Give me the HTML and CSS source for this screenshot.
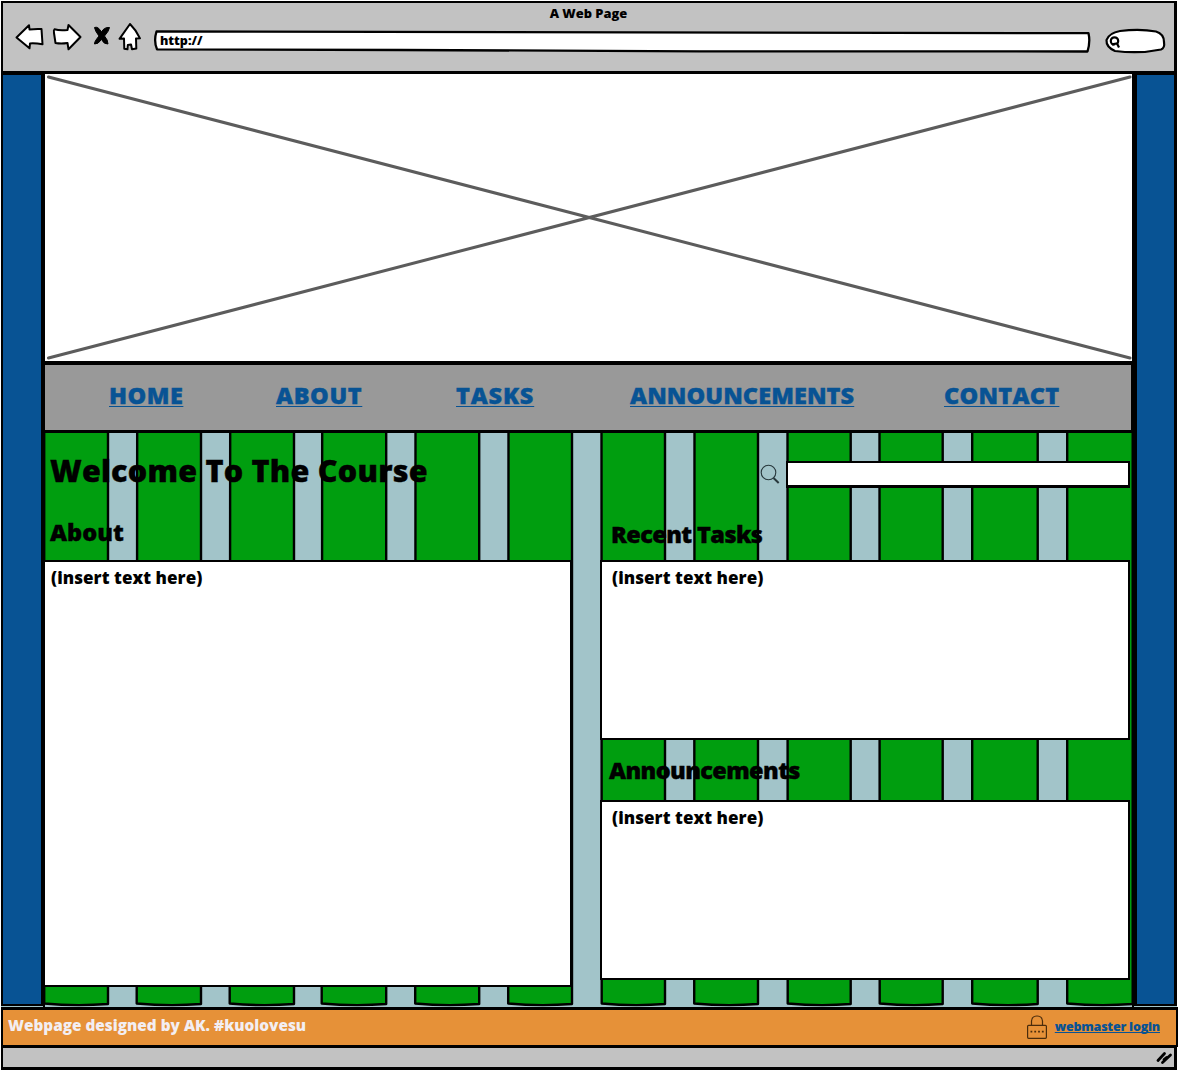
FILE: index.html
```
<!DOCTYPE html>
<html lang="en">
<head>
<meta charset="utf-8">
<title>A Web Page</title>
<link rel="stylesheet" href="styles.css">
</head>
<body>
<div class="window">
  <header class="chrome">
    <div class="chrome-title"><span class="t-title">A Web Page</span></div>
    <div class="toolbar">
      <svg class="tools" width="136" height="36" viewBox="10 20 136 36" fill="#fff" stroke="#000" stroke-width="2" stroke-linejoin="round">
        <path d="M16.500 37.500L29 25.200L29.500 29.500Q35.500 28.600 41.500 29L42.500 44.300Q35.500 43 30 43.400L29.500 48.300Z"/>
        <path d="M80.500 37L68.500 25L67.500 30Q60 31 54.500 29.300Q53.500 30 54 33L55.500 43Q61 44 67.500 43L68.500 49.300Z"/>
        <path d="M94.500 27.500Q98 26 101.500 32Q104 27 109.500 27.500Q109 31 104.500 36Q108 40 108 44Q104 44.500 101.500 39.500Q98 44.500 94.500 44Q94 42 99 36Q95 31 94.500 27.500Z" fill="#000" stroke-width="1"/>
        <path d="M130 24L119.500 38.800L124 38.500L124.300 48.800L127.500 49.300L127.800 45L131 44.500L132 49.300L136.300 48.500L136 38.500L140 38.300Q136.500 30.500 130 24Z"/>
      </svg>
      <div class="address">
        <svg class="sketch" width="938" height="24" viewBox="153 30 938 24" fill="#fff" stroke="#000" stroke-width="2.300" stroke-linejoin="round"><path d="M156.500 31.500L1088.500 33.200Q1090.500 42 1087.500 51.500L700 51.300L400 50L157 49.300Q153.500 41 156.500 31.500Z"/></svg>
        <span class="t-url">http://</span>
      </div>
      <svg class="finder" width="64" height="30" viewBox="1103 26 64 30" fill="#fff" stroke="#000" stroke-width="2.200"><path d="M1115 51Q1106 47 1106.500 40Q1109 33 1120 31Q1140 28.500 1156 31.500Q1164 34 1164 42Q1165 48 1161 49.500Q1140 54 1115 51Z"/><circle cx="1114.500" cy="41" r="3.700"/><path d="M1112 44.300L1117 43.500L1119 47.500"/></svg>
    </div>
  </header>

  <div class="middle">
    <aside class="rail rail-left"></aside>
    <main class="page">
      <div class="hero">
        <svg width="1087" height="286" viewBox="45 74 1087 286" stroke="#5c5c5c" stroke-width="3" stroke-linecap="round"><path d="M48.500 77L1130 358M48.500 358L1130 77"/></svg>
      </div>
      <nav class="nav">
        <a class="n-home">HOME</a><a class="n-about">ABOUT</a><a class="n-tasks">TASKS</a><a class="n-ann">ANNOUNCEMENTS</a><a class="n-contact">CONTACT</a>
      </nav>
      <div class="content">
        <svg class="stripes" width="1089" height="574" viewBox="44.300 433 1089 574">
          <g fill="#009e0f" stroke="#000" stroke-width="2.400" stroke-linejoin="round">
            <path d="M44.500 425H108.300V1004Q76 1006.500 44.500 1003.500Z"/>
            <path d="M137.500 425H201.300V1004Q170 1006.500 137 1003.500Z"/>
            <path d="M230.500 425H294.300V1004Q262 1006.500 230 1003.500Z"/>
            <path d="M322.500 425H386.500V1004Q355 1006.500 322 1003.500Z"/>
            <path d="M415.800 425H479.500V1004Q447 1006.500 415.500 1003.500Z"/>
            <path d="M508.800 425H572.300V1004Q540 1006.500 508.500 1003.500Z"/>
            <path d="M601.800 425H665.300V1004Q634 1006.500 602 1003.500Z"/>
            <path d="M694.800 425H758.300V1004Q727 1006.500 694.500 1003.500Z"/>
            <path d="M787.800 425H851V1004Q820 1006.500 788 1003.500Z"/>
            <path d="M879.800 425H943V1004Q912 1006.500 880 1003.500Z"/>
            <path d="M972.500 425H1038V1004Q1005 1006.500 972.500 1003.500Z"/>
            <path d="M1067.500 425H1133V1004Q1100 1006.500 1067.500 1003.500Z"/>
          </g>
        </svg>
        <section class="col">
          <h1>Welcome To The Course</h1>
          <h2 class="h-about">About</h2>
          <div class="box box-tall"><span class="t-box">(insert text here)</span></div>
        </section>
        <section class="col col-right">
          <div class="search">
            <svg width="22" height="22" viewBox="759 464 22 22" fill="none" stroke="#28383c"><circle cx="768.500" cy="472.500" r="7.300" stroke-width="1.100"/><path d="M773.500 478L778.700 483" stroke-width="2"/></svg>
            <div class="search-field"></div>
          </div>
          <h2 class="h-tasks">Recent Tasks</h2>
          <div class="box box-short"><span class="t-box">(insert text here)</span></div>
          <h2 class="h-ann">Announcements</h2>
          <div class="box box-short"><span class="t-box">(insert text here)</span></div>
        </section>
      </div>
    </main>
    <aside class="rail rail-right"></aside>
  </div>

  <footer class="footer">
    <span class="t-foot">Webpage designed by AK. #kuolovesu</span>
    <div class="login">
      <svg width="22" height="26" viewBox="1026 1014 22 26" fill="none" stroke="#4a2c0c" stroke-width="1.200"><rect x="1027.600" y="1025.300" width="18.800" height="13" rx="1"/><path d="M1031.500 1025V1021Q1032 1016 1037 1016Q1042 1016 1042.500 1021V1025"/><path d="M1030.500 1031.700H1044" stroke-width="1.800" stroke-dasharray="1.800 2"/></svg>
      <a class="t-login">webmaster login</a>
    </div>
  </footer>
  <div class="status">
    <svg width="18" height="16" viewBox="1155 1050 18 16" stroke="#000" stroke-width="2.800" stroke-linecap="round"><path d="M1158 1060.500L1164.500 1053.500M1162.500 1062.500L1170.500 1055M1164 1059.500L1166.500 1057.500"/></svg>
  </div>
</div>
</body>
</html>
```
FILE: styles.css
```
* { box-sizing: border-box; }
body {
  margin: 0;
  background: #fff;
  font-family: "Open Sans", "Noto Sans", sans-serif;
  font-weight: 800;
  color: #000;
  width: 1179px;
  height: 1071px;
  overflow: hidden;
}
h1, h2 { margin: 0; font-weight: 800; white-space: nowrap; -webkit-text-stroke: 0.4px #000; }
svg { display: block; flex: none; }
.window {
  width: 1177px;
  margin-left: 1px;
  padding-top: 1px;
  display: flex;
  flex-direction: column;
}
.chrome {
  height: 72px;
  background: #c2c2c2;
  border: 2.5px solid #000;
  border-width: 2px 3px 2px 2px;
  width: 1176px;
}
.chrome-title { height: 20px; text-align: center; font-size: 12.9px; line-height: 21px; }
.toolbar { display: flex; align-items: flex-start; padding-left: 7px; }
.tools { margin-top: -3px; }
.address { position: relative; margin: 7px 0 0 7px; width: 938px; height: 24px; }
.sketch { position: absolute; left: 0; top: 0; }
.t-url { position: relative; display: block; padding-left: 7px; font-size: 12.5px; line-height: 22px; }
.finder { margin: 3px 0 0 12px; }

.middle { display: flex; height: 934px; width: 1176px; background: #a2c4c9; }
.rail { background: #085394; border: solid #000; height: 933px; }
.rail-left { width: 42px; border-width: 2px 2px 2px 2px; box-shadow: 1px 0 #777; }
.rail-right { width: 43px; border-width: 2px 3px 2px 3px; }
.page { position: relative; width: 1091px; display: flex; flex-direction: column; border: solid #000; border-width: 1px 2px 0 2px; box-shadow: inset 1px 0 #000; }
.hero { height: 287px; background: #fff; }
.nav {
  height: 72px;
  border: solid #000;
  border-width: 4px 1px 3px 0;
  background: #999;
  display: grid;
  grid-template-columns: 167px 180px 174px 314px auto;
  justify-items: start;
  align-items: start;
  padding: 12px 0 0 64px;
}
.nav a {
  color: #085394;
  font-size: 23.5px;
  line-height: 36px;
  text-decoration: underline;
  text-decoration-thickness: 1px;
  text-underline-offset: 2px;
  text-decoration-skip-ink: none;
  -webkit-text-stroke: 0.4px #085394;
}
.nav .n-home { letter-spacing: 0.5px; }
.nav .n-about { letter-spacing: 0.6px; }
.nav .n-tasks { letter-spacing: 0.8px; }
.nav .n-ann { letter-spacing: 0.08px; }
.nav .n-contact { letter-spacing: 0.25px; }
.content {
  position: relative;
  flex: 1;
  background: #a2c4c9;
  display: flex;
  gap: 28px;
}
.stripes { position: absolute; left: -1px; top: 0; }
.col { position: relative; width: 527px; flex: none; display: flex; flex-direction: column; }
h1 { font-size: 30.5px; line-height: 40px; padding: 17px 0 0 5px; letter-spacing: 0.24px; }
h2 { font-size: 23.5px; line-height: 32px; }
.h-about { padding: 26px 0 0 5px; height: 70px; }
.box { background: #fff; border: 2px solid #000; }
.box-tall { height: 427px; border-left-width: 0; padding-left: 6px; }
.col-right { width: 530px; }
.box-short { height: 180px; padding-left: 10px; }
.t-box { display: block; font-size: 17px; line-height: 32px; letter-spacing: 0.06px; }
.search { display: flex; padding: 28px 0 0 159px; height: 55px; gap: 5px; }
.search svg { margin-top: 3px; }
.search-field { flex: 1; height: 27px; background: #fff; border: 2.500px solid #000; border-bottom-width: 3px; }
.h-tasks { height: 72px; padding: 30px 0 0 11px; letter-spacing: -0.6px; }
.h-ann { height: 60px; padding: 14px 0 0 9px; letter-spacing: -0.62px; }

.footer {
  height: 40px;
  background: #e69138;
  border: solid #000;
  border-width: 3px 2px 2px 2px;
  display: flex;
  justify-content: space-between;
  align-items: flex-start;
  padding: 0 16px 0 5px;
}
.t-foot { color: #f3eef2; font-size: 15.35px; line-height: 31px; }
.login { display: flex; align-items: flex-start; gap: 7px; padding-top: 4px; }
.t-login { color: #085394; font-size: 12.5px; line-height: 25px; letter-spacing: -0.22px; text-decoration: underline; text-decoration-skip-ink: none; text-decoration-thickness: 1px; text-underline-offset: 1px; }
.status {
  width: 1176px;
  height: 23px;
  background: #c2c2c2;
  border: solid #000;
  border-width: 1px 3px 3px 2px;
  display: flex;
  justify-content: flex-end;
  padding: 2px 1px 0 0;
}
```
